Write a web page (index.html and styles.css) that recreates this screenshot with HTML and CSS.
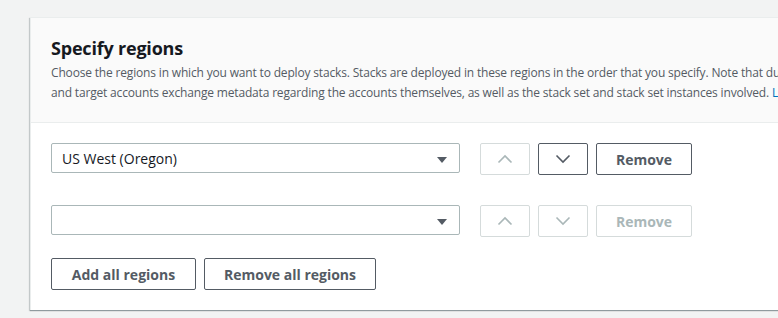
FILE: index.html
```html
<!DOCTYPE html>
<html>
<head>
<meta charset="utf-8">
<link rel="stylesheet" href="styles.css">
</head>
<body>
<div class="card">
  <div class="card-header">
    <h2 class="title">Specify regions</h2>
    <p class="desc"><span class="line">Choose the regions in which you want to deploy stacks. Stacks are deployed in these regions in the order that you specify. Note that during stack set operations, administrator</span><span class="line">and target accounts exchange metadata regarding the accounts themselves, as well as the stack set and stack set instances involved. <a class="link" href="#">Learn more</a></span></p>
  </div>
  <div class="card-body">
    <div class="row">
      <div class="select"><span class="select-text">US West (Oregon)</span><span class="caret"></span></div>
      <div class="btn btn-icon disabled"><svg width="16" height="10" viewBox="0 0 16 10"><path d="M1.5 8.5 L8 2 L14.5 8.5" fill="none" stroke="currentColor" stroke-width="1.6"/></svg></div>
      <div class="btn btn-icon"><svg width="16" height="10" viewBox="0 0 16 10"><path d="M1.5 1.5 L8 8 L14.5 1.5" fill="none" stroke="currentColor" stroke-width="1.6"/></svg></div>
      <div class="btn btn-remove">Remove</div>
    </div>
    <div class="row">
      <div class="select"><span class="select-text"></span><span class="caret"></span></div>
      <div class="btn btn-icon disabled"><svg width="16" height="10" viewBox="0 0 16 10"><path d="M1.5 8.5 L8 2 L14.5 8.5" fill="none" stroke="currentColor" stroke-width="1.6"/></svg></div>
      <div class="btn btn-icon disabled"><svg width="16" height="10" viewBox="0 0 16 10"><path d="M1.5 1.5 L8 8 L14.5 1.5" fill="none" stroke="currentColor" stroke-width="1.6"/></svg></div>
      <div class="btn btn-remove disabled">Remove</div>
    </div>
    <div class="actions">
      <div class="btn btn-add">Add all regions</div>
      <div class="btn btn-remove-all">Remove all regions</div>
    </div>
  </div>
</div>
</body>
</html>
```

FILE: styles.css
```css
html, body {
  margin: 0;
  padding: 0;
}
body {
  background: #f2f3f3;
  font-family: "Open Sans", "Noto Sans", sans-serif;
  color: #16191f;
  overflow: hidden;
  width: 778px;
  height: 318px;
  padding: 17px 0 0 30px;
  box-sizing: border-box;
}
.card {
  width: 1100px;
  background: #fff;
  border-top: 1px solid #eaeded;
  border-left: 1px solid #eaeded;
  box-shadow: 0 1px 1px 0 rgba(0, 28, 36, 0.3), -1px 1px 1px 0 rgba(0, 28, 36, 0.15);
}
.card-header {
  background: #fafafa;
  border-bottom: 1px solid #eaeded;
  padding: 19px 20px 19px 20px;
}
.title {
  margin: 0;
  font-size: 18px;
  line-height: 22px;
  font-weight: 700;
  letter-spacing: -0.2px;
  color: #16191f;
}
.desc {
  margin: 4px 0 0 0;
  font-size: 12px;
  line-height: 20px;
  letter-spacing: -0.17px;
  color: #545b64;
}
.line {
  display: block;
  white-space: nowrap;
}
.link {
  color: #0073bb;
  text-decoration: none;
}
.card-body {
  padding: 20px 20px 20px 20px;
  display: flex;
  flex-direction: column;
  gap: 30px;
}
.row {
  display: flex;
  align-items: flex-start;
  gap: 8px;
}
.actions {
  display: flex;
  gap: 8px;
  margin-top: -9px;
}
.select {
  width: 409px;
  height: 30px;
  box-sizing: border-box;
  border: 1px solid #aab7b8;
  border-radius: 2px;
  display: flex;
  align-items: center;
  justify-content: space-between;
  padding: 0 12px 0 10px;
  margin-right: 12px;
  font-size: 14px;
}
.select-text {
  color: #16191f;
}
.caret {
  width: 0;
  height: 0;
  border-left: 5px solid transparent;
  border-right: 5px solid transparent;
  border-top: 6px solid #545b64;
  margin-top: 4px;
}
.btn {
  height: 32px;
  box-sizing: border-box;
  border: 1px solid #545b64;
  border-radius: 2px;
  display: flex;
  align-items: center;
  justify-content: center;
  font-size: 14px;
  font-weight: 700;
  color: #545b64;
  background: #fff;
}
.btn.disabled {
  border-color: #d5dbdb;
  color: #aab7b8;
}
.btn-icon {
  width: 50px;
}
.btn-remove {
  width: 96px;
}
.btn-add {
  width: 145px;
}
.btn-remove-all {
  width: 172px;
}
```
